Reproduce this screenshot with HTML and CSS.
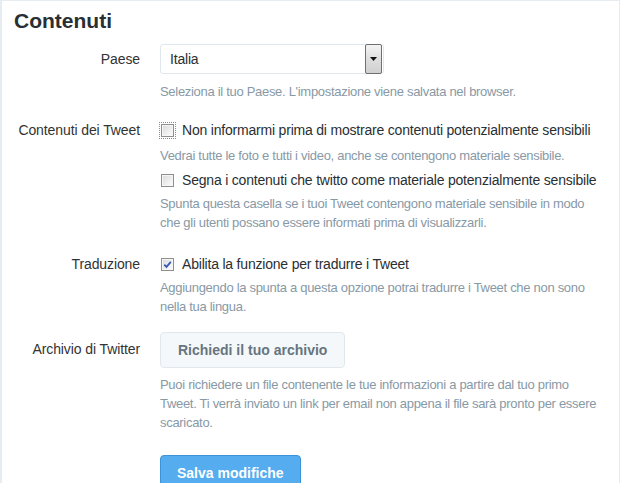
FILE: index.html
```html
<!DOCTYPE html>
<html lang="it">
<head>
    <meta charset="UTF-8">
    <meta name="viewport" content="width=device-width, initial-scale=1.0">
    <title>Impostazioni - Contenuti</title>
    <link rel="stylesheet" href="styles.css">
</head>
<body>
    <div class="panel">
        <h2 class="panel-title">Contenuti</h2>

        <form class="settings">
            <div class="row row-country">
                <label class="row-label label-select" for="country">Paese</label>
                <div class="row-control">
                    <div class="select">
                        <select id="country" class="select-input">
                            <option>Italia</option>
                        </select>
                        <span class="select-arrow">
                            <svg width="7" height="5" viewBox="0 0 7 5"><path d="M0 0h7L3.5 4z" fill="#111"/></svg>
                        </span>
                    </div>
                    <p class="help help-select">Seleziona il tuo Paese. L'impostazione viene salvata nel browser.</p>
                </div>
            </div>

            <div class="row row-tweets">
                <span class="row-label">Contenuti dei Tweet</span>
                <div class="row-control">
                    <label class="option">
                        <span class="check"><input type="checkbox" class="box box-focus"></span>
                        Non informarmi prima di mostrare contenuti potenzialmente sensibili
                    </label>
                    <p class="help help-first">Vedrai tutte le foto e tutti i video, anche se contengono materiale sensibile.</p>
                    <label class="option option-next">
                        <span class="check"><input type="checkbox" class="box"></span>
                        Segna i contenuti che twitto come materiale potenzialmente sensibile
                    </label>
                    <p class="help">Spunta questa casella se i tuoi Tweet contengono materiale sensibile in modo che gli utenti possano essere informati prima di visualizzarli.</p>
                </div>
            </div>

            <div class="row row-translate">
                <span class="row-label">Traduzione</span>
                <div class="row-control">
                    <label class="option">
                        <span class="check">
                            <input type="checkbox" class="box" checked>
                            <svg class="tick" width="13" height="13" viewBox="0 0 13 13"><path d="M3.3 6.6l2.2 2.3 4.3-5" fill="none" stroke="#3455b4" stroke-width="1.7"/></svg>
                        </span>
                        Abilita la funzione per tradurre i Tweet
                    </label>
                    <p class="help">Aggiungendo la spunta a questa opzione potrai tradurre i Tweet che non sono nella tua lingua.</p>
                </div>
            </div>

            <div class="row row-archive">
                <span class="row-label label-button">Archivio di Twitter</span>
                <div class="row-control">
                    <button type="button" class="btn">Richiedi il tuo archivio</button>
                    <p class="help help-button">Puoi richiedere un file contenente le tue informazioni a partire dal tuo primo Tweet. Ti verrà inviato un link per email non appena il file sarà pronto per essere scaricato.</p>
                </div>
            </div>

            <div class="row row-save">
                <span class="row-label"></span>
                <div class="row-control">
                    <button type="button" class="btn btn-primary">Salva modifiche</button>
                </div>
            </div>
        </form>
    </div>
</body>
</html>
```

FILE: styles.css
```css
/* Page frame */
body {
    margin: 0;
    padding: 1px 1px 0 2px;
    background: #e6ecf0;
    font-family: 'Liberation Sans', Arial, sans-serif;
    color: #292f33;
}

.panel {
    background: #fff;
    padding: 8px 12px 0;
    min-height: 474px;
}

.panel-title {
    margin: 0;
    font-size: 21px;
    line-height: 24px;
    font-weight: 700;
    color: #292f33;
}

/* Settings rows: label column + control column */
.row {
    display: flex;
    gap: 20px;
}

.row-country { margin-top: 11px; }
.row-tweets { margin-top: 19px; }
.row-translate { margin-top: 22px; }
.row-archive { margin-top: 16px; }
.row-save { margin-top: 23px; }

.row-label {
    width: 126px;
    flex-shrink: 0;
    text-align: right;
    white-space: nowrap;
    font-size: 14px;
    line-height: 20px;
    letter-spacing: -0.1px;
    color: #333;
}

.label-select { line-height: 30px; }
.label-button { line-height: 34px; }

.row-control {
    width: 450px;
}

/* Help text under each control */
.help {
    margin: 4px 0 0;
    font-size: 13px;
    line-height: 19px;
    letter-spacing: -0.3px;
    color: #8899a6;
}

.help-select { margin-top: 8px; }
.help-first { margin-top: 6px; }
.help-button { margin-top: 7px; }

/* Country dropdown */
.select {
    display: grid;
    width: 224px;
    height: 30px;
}

.select > * {
    grid-area: 1 / 1;
}

.select-input {
    appearance: none;
    -webkit-appearance: none;
    height: 30px;
    margin: 0;
    padding: 0 9px;
    border: 1px solid #e1e8ed;
    border-radius: 3px;
    background: #fff;
    font-family: inherit;
    font-size: 14px;
    letter-spacing: -0.2px;
    color: #292f33;
}

.select-arrow {
    justify-self: end;
    align-self: center;
    width: 15px;
    height: 28px;
    margin-right: 2px;
    border: 1px solid #707070;
    border-radius: 2px;
    background: linear-gradient(#f4f4f4, #dedede 50%, #d0d0d0);
    display: flex;
    align-items: center;
    justify-content: center;
    pointer-events: none;
}

/* Checkbox options */
.option {
    display: flex;
    align-items: center;
    gap: 8px;
    font-size: 14px;
    line-height: 20px;
    letter-spacing: -0.2px;
    color: #292f33;
    white-space: nowrap;
}

.option-next { margin-top: 5px; }

.check {
    display: inline-grid;
    width: 13px;
    height: 13px;
    margin-left: 1px;
}

.check > * {
    grid-area: 1 / 1;
}

.box {
    appearance: none;
    -webkit-appearance: none;
    width: 13px;
    height: 13px;
    margin: 0;
    border: 1px solid #8e8f8f;
    background: linear-gradient(135deg, #d9d9d9, #f7f7f7 80%);
    box-shadow: inset 0 0 0 1px #f6f6f6;
}

.box-focus {
    outline: 1px dotted #8a8a8a;
    outline-offset: 1px;
}

.tick {
    pointer-events: none;
}

/* Buttons */
.btn {
    height: 36px;
    padding: 0 17px;
    border: 1px solid #e1e8ed;
    border-radius: 4px;
    background: #f5f8fa;
    font-family: inherit;
    font-size: 14px;
    font-weight: 700;
    color: #66757f;
    cursor: pointer;
}

.btn-primary {
    padding: 0 16px;
    background: #55acee;
    border-color: #3b94d9;
    color: #fff;
}
```
